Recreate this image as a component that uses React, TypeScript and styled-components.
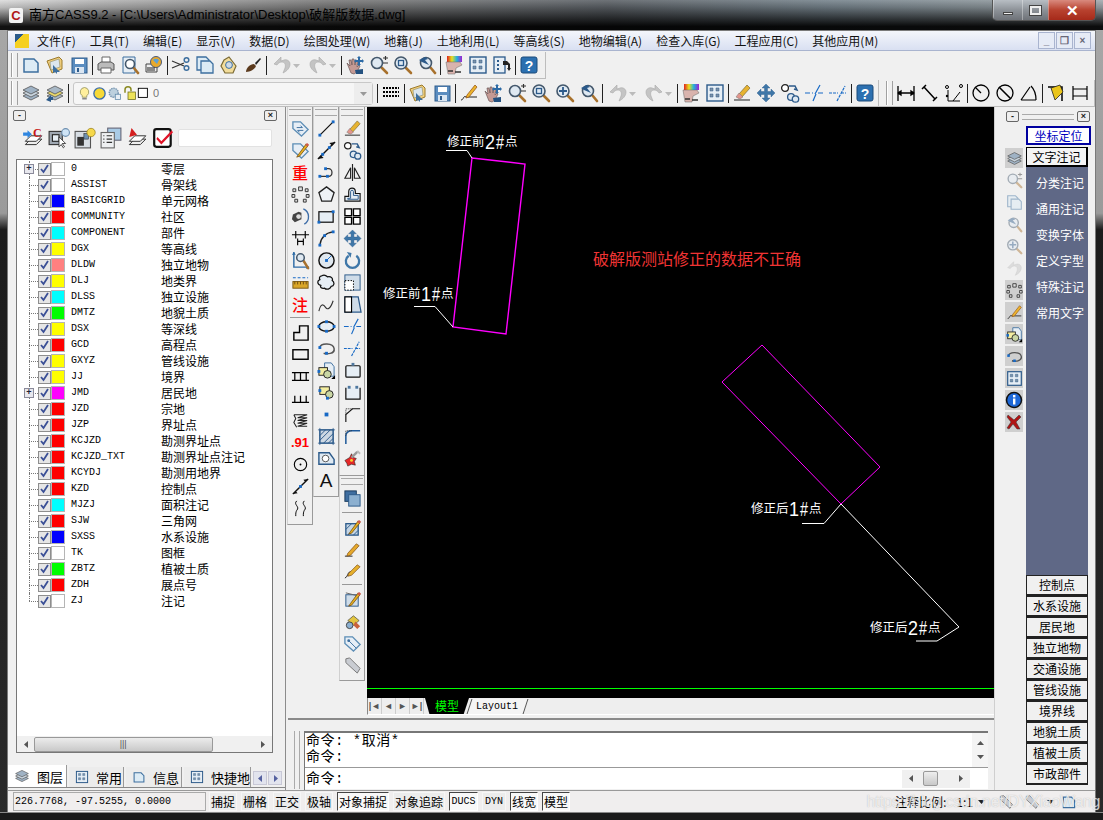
import React from 'react';
import styled, { createGlobalStyle } from 'styled-components';

const CJK = `"Noto Sans CJK SC", "Liberation Sans", sans-serif`;
const MONO = `"Liberation Mono", "Noto Sans CJK SC", monospace`;

const GlobalStyle = createGlobalStyle`
  html, body { margin: 0; padding: 0; overflow: hidden; background: #111; }
  body { font-family: ${CJK}; font-size: 12px; color: #000; }
  * { box-sizing: border-box; }
`;

/* ---------- icons ---------- */
const B = '#3d6f9f';
const mag = (cx = 8, cy = 8, r = 5, fill = '#dfe9f2') => (
  <>
    <path d={`M${cx + r - 1} ${cy + r - 1}L18 18`} stroke="#a8712c" strokeWidth="2.6" strokeLinecap="round" />
    <circle cx={cx} cy={cy} r={r} fill={fill} stroke="#44586c" strokeWidth="1.6" />
  </>
);
const node = (x: number, y: number) => <rect x={x - 1.5} y={y - 1.5} width="3" height="3" fill="#1769c5" />;
const hand = (
  <path d="M2 8l3 3-1-6 2 0 1 5 0-6 2 0 1 6 1-5 2 1-1 6 2-2 1 1-3 6-3 2-3-1z" fill="#c59a94" stroke="#6b5656" strokeWidth=".7" />
);
const stack = (c1: string, c2: string) => (
  <>
    <path d="M10 9l8 4-8 4-8-4z" fill={c2} stroke="#555" strokeWidth=".8" />
    <path d="M10 6l8 4-8 4-8-4z" fill={c1} stroke="#555" strokeWidth=".8" />
    <path d="M10 3l8 4-8 4-8-4z" fill={c2} stroke="#555" strokeWidth=".8" />
  </>
);
const sheets = (
  <>
    <path d="M3 16l5-5h10l-5 5z" fill="#eee" stroke="#333" strokeWidth=".9" />
    <path d="M3 13l5-5h10l-5 5z" fill="#fff" stroke="#333" strokeWidth=".9" />
  </>
);
const tag = (
  <path d="M2 3h8l8 8-7 7-9-8z" fill="#e6eef6" stroke="#5c8db5" strokeWidth="1.4" />
);
const pencil = (
  <>
    <path d="M8 14L16 3l2 2-9 11-3 1z" fill="#e6b020" stroke="#704a10" strokeWidth=".8" />
    <path d="M15 4l2-2 2 2-2 2z" fill="#d05a4a" />
  </>
);

const ICONS: Record<string, React.ReactNode> = {
  newdoc: <path d="M3 4h10l4 4v9H3z" fill="#dcebf5" stroke={B} strokeWidth="1.5" />,
  open: (
    <>
      <path d="M2 6l12-4 3 3v9l-10 4z" fill="#f1cf7d" stroke="#9b7a2c" />
      <path d="M5 7l9-3 1 8-9 3z" fill="#dbe6ee" stroke="#8a8a6a" strokeWidth=".6" />
      <path d="M8 10l7 7-3 0 0 2-2-2-2 1z" fill={B} />
    </>
  ),
  save: (
    <>
      <rect x="3" y="3" width="15" height="15" fill="#5b8dc0" stroke="#2f5c8c" />
      <rect x="6" y="4" width="9" height="5" fill="#fff" />
      <rect x="6" y="12" width="9" height="6" fill="#dbe6f2" />
      <rect x="8" y="13" width="2" height="4" fill="#2f5c8c" />
    </>
  ),
  print: (
    <>
      <path d="M6 2h8v6H6z" fill="#fff" stroke="#666" />
      <path d="M2 9l3-2h10l3 2v6H2z" fill="#bbb" stroke="#555" />
      <path d="M5 13h10v5H5z" fill="#fff" stroke="#666" />
    </>
  ),
  preview: (
    <>
      <path d="M3 2h12v16H3z" fill="#e6eef5" stroke={B} />
      {mag(10, 9, 4.5, '#fff')}
    </>
  ),
  publish: (
    <>
      <path d="M2 9h11v8H2z" fill="#eee" stroke="#444" />
      <circle cx="12" cy="7" r="5.5" fill="#e8a92c" stroke="#4a5a7a" />
      <path d="M9 5a4 4 0 016 0l-2 4z" fill="#5aa0d8" />
      <path d="M3 13h8M3 15h8" stroke="#222" />
    </>
  ),
  cut: (
    <>
      <path d="M1 6l12 5M1 13l12-5" stroke="#333" strokeWidth="1.2" />
      <circle cx="15.5" cy="5" r="2.3" fill="none" stroke={B} strokeWidth="1.5" />
      <circle cx="15.5" cy="13" r="2.3" fill="none" stroke={B} strokeWidth="1.5" />
    </>
  ),
  copy: (
    <>
      <path d="M2 2h9l3 3v10H2z" fill="#dcebf5" stroke={B} strokeWidth="1.3" />
      <path d="M6 6h9l3 3v9H6z" fill="#dcebf5" stroke={B} strokeWidth="1.3" />
    </>
  ),
  paste: (
    <>
      <path d="M5 5l5-3 7 9-3 7H6L2 11z" fill="#f2dc9a" stroke="#7a6a35" strokeWidth="1.2" />
      <circle cx="10" cy="10" r="3.4" fill="#cfdbe6" stroke={B} />
    </>
  ),
  brush: (
    <>
      <path d="M12 8l5-5 1 1-5 6z" fill="#222" />
      <path d="M3 17c0-4 4-8 8-8l2 2c-1 3-6 6-10 6z" fill="#5b3a1d" />
    </>
  ),
  undo: <path d="M9 2L2 9l3 1c1-2 3-3 5-3 3 0 4 3 3 6l-2 5c4-2 7-5 7-9 0-3-3-5-6-4L9 6z" fill="#c4c4c4" stroke="#aaa" strokeWidth=".6" />,
  redo: <path d="M11 2l7 7-3 1c-1-2-3-3-5-3-3 0-4 3-3 6l2 5c-4-2-7-5-7-9 0-3 3-5 6-4l3 1z" fill="#c4c4c4" stroke="#aaa" strokeWidth=".6" />,
  pan: (
    <>
      {hand}
      <path d="M14 1l2 2h-1v2h2V4l2 2-2 2V7h-2v2h1l-2 2-2-2h1V7h-2v1l-2-2 2-2v1h2V3h-1z" fill="#2c6aa5" />
      <path d="M10 15l8-1v5h-7z" fill="#24517f" />
    </>
  ),
  zoomrt: (
    <>
      {mag(8, 8, 5.5)}
      <path d="M14 3h5M16.5 1v4M14 8h5" stroke="#333" strokeWidth="1.2" />
    </>
  ),
  zoomwin: (
    <>
      {mag(8, 8, 6)}
      <rect x="5.5" y="5.5" width="5" height="5" fill="none" stroke="#2c5a8a" strokeWidth="1.3" />
    </>
  ),
  zoomall: (
    <>
      {mag(8, 8, 6)}
      <path d="M8 4v8M4 8h8" stroke="#2c5a8a" strokeWidth="1.8" />
    </>
  ),
  zoomprev: (
    <>
      {mag(9, 8, 5.5)}
      <path d="M2 5l6-3 3 2-3 1 4 5-7-3z" fill="#2c5a8a" />
    </>
  ),
  props: (
    <>
      <rect x="3" y="1" width="15" height="6" fill="url(#rb)" />
      <path d="M2 7h14l2 3-6 3-1 6H4z" fill="#d9b3ad" stroke="#666" strokeWidth=".5" />
      <path d="M4 16h5M11 17h6" stroke="#333" strokeWidth="1.4" />
    </>
  ),
  dc: (
    <>
      <rect x="2" y="2" width="16" height="16" fill="#e6eef5" stroke="#2c5a8a" strokeWidth="1.4" />
      <path d="M5 5h3v3H5zM11 5h3v3h-3zM5 11h3v3H5zM11 11h3v3h-3z" fill="#7d93a8" stroke="#2c5a8a" strokeWidth=".5" />
    </>
  ),
  tool: (
    <>
      <rect x="2" y="2" width="11" height="16" fill="#e6eef5" stroke="#2c5a8a" strokeWidth="1.3" />
      <path d="M5 5h2v2H5zM5 9h2v2H5zM5 13h2v2H5z" fill="#2c5a8a" />
      <path d="M11 6h4l3 3v4h1l-2 3-2-3h1v-3h-5z" fill="#222" />
    </>
  ),
  help: (
    <>
      <rect x="2" y="2" width="16" height="16" rx="2" fill="#2c70b0" stroke="#1a4a7a" />
      <text x="10" y="15.5" textAnchor="middle" fontSize="14" fontWeight="700" fill="#fff" fontFamily="Liberation Sans">?</text>
    </>
  ),
  layers: stack('#c8d4de', '#9fb2c4'),
  layers2: (
    <>
      {stack('#e8d86a', '#a8b8c6')}
      <path d="M1 17l5-5v2h2v3H6v2z" fill="#2c5a8a" />
    </>
  ),
  layerCur: (
    <>
      {sheets}
      <path d="M1 5h4V3l4 3.500L5 10V8H1z" fill="#2f86e0" />
      <text x="14" y="9" textAnchor="middle" fontSize="11" fontWeight="700" fill="#c81818" fontFamily="Liberation Serif">C</text>
    </>
  ),
  layerSel: (
    <>
      <rect x="1" y="4" width="12" height="12" fill="#9fa8b2" stroke="#333" />
      <rect x="4" y="7" width="6" height="6" fill="#e6eef5" stroke="#222" />
      <circle cx="16" cy="5" r="3.500" fill="#cfe4f6" stroke="#6d8fb0" />
      <path d="M10 9l0 9 2-2 2 3 1-1-2-3 3 0z" fill="#fff" stroke="#222" strokeWidth=".7" />
    </>
  ),
  layerState: (
    <>
      <rect x="1" y="4" width="14" height="15" fill="#d7dde3" stroke="#555" />
      <rect x="3" y="9" width="6" height="8" fill="#333" />
      <rect x="9" y="6" width="4" height="5" fill="#6d90b0" stroke="#222" strokeWidth=".5" />
      <circle cx="15.500" cy="5" r="3.800" fill="#f6d84a" stroke="#998226" strokeWidth=".7" />
    </>
  ),
  layerList: (
    <>
      <rect x="7" y="1" width="12" height="11" fill="#a9cbe6" stroke="#667" />
      <rect x="1" y="5" width="12" height="14" fill="#eef0f2" stroke="#666" />
      <path d="M3 8h1M6 8h5M3 11h1M6 11h5M3 14h1M6 14h5" stroke="#333" />
    </>
  ),
  layerRed: (
    <>
      {sheets}
      <path d="M5 1l5 6-7 2z" fill="#d42020" />
    </>
  ),
  checkRed: (
    <>
      <rect x="2" y="2" width="15" height="16" rx="2" fill="#fff" stroke="#111" strokeWidth="2" />
      <path d="M5 9l3.500 4L18 3l1 2-10.500 11L4 11z" fill="#e01428" />
    </>
  ),
  bulb: (
    <>
      <path d="M10 2a6 6 0 00-3 11v2h6v-2a6 6 0 00-3-11z" fill="#ffef9c" stroke="#8a8a55" />
      <path d="M7 16h6v2H7z" fill="#888" />
    </>
  ),
  sun: <circle cx="10" cy="10" r="7.5" fill="#f6d937" stroke="#3d6ea8" strokeWidth="1.8" />,
  gear: (
    <>
      <circle cx="9" cy="9" r="6" fill="#bcd0de" stroke="#7c99b3" strokeWidth="2" strokeDasharray="2 1" />
      <rect x="11" y="11" width="7" height="7" fill="#e6eef5" stroke="#5c86a8" />
    </>
  ),
  lock: (
    <>
      <path d="M4 9V5a4 4 0 018 0v2" fill="none" stroke="#8a8a22" strokeWidth="2" />
      <rect x="8" y="8" width="10" height="10" fill="#ede35a" stroke="#6a6a1a" />
    </>
  ),
  swatch: <rect x="2" y="2" width="14" height="14" fill="#fff" stroke="#000" strokeWidth="1.4" />,
  linetype: (
    <path d="M2 5h16M2 9h16M2 13h16" stroke="#000" strokeWidth="1.8" strokeDasharray="2 1" />
  ),
  matchprop: (
    <>
      <path d="M2 17c3 0 2-5 5-3l11 0" fill="none" stroke="#222" />
      <path d="M8 12L16 2l2 2-8 10-3 1z" fill="#ecb42c" stroke="#9b5a1c" strokeWidth=".8" />
    </>
  ),
  erase: (
    <>
      <path d="M2 17h16" stroke="#222" />
      <path d="M7 11l8-9 3 3-8 9-4 1z" fill="#e7b330" stroke="#6b5a2a" strokeWidth=".6" />
      <path d="M4 14l3-4 4 4-3 2z" fill="#e2958c" stroke="#777" strokeWidth=".5" />
    </>
  ),
  movearrows: <path d="M10 1l4 4h-2.500v3.500H15V6l4 4-4 4v-2.500h-3.500V15H14l-4 4-4-4h2.500v-3.500H5V14l-4-4 4-4v2.500h3.500V5H6z" fill="#3f77a8" stroke="#2c5a8a" strokeWidth=".4" />,
  copycircles: (
    <>
      <circle cx="5" cy="5" r="3.400" fill="#fff" stroke="#222" strokeWidth="1.300" />
      <circle cx="11" cy="14" r="3.400" fill="#dfe9f2" stroke="#2c5a8a" strokeWidth="1.300" />
      <circle cx="15.500" cy="16" r="3.200" fill="#dfe9f2" stroke="#2c5a8a" strokeWidth="1.300" />
      <path d="M9 3h6l2 4-3-1" fill="none" stroke="#2c5a8a" strokeWidth="1.500" />
    </>
  ),
  breakat: <path d="M1 10h5M8 10h1M11 11l5-9M9 18l3-7M14 10h5" stroke="#1769c5" strokeWidth="1.200" fill="none" />,
  breakb: <path d="M1 10h9M13 10h5M9 18l8-15" stroke="#1769c5" strokeWidth="1.200" strokeDasharray="3 1" fill="none" />,
  dimh: <path d="M2 3v15M18 3v15M2 10h16M2 10l3-2v4zM18 10l-3-2v4z" stroke="#000" strokeWidth="1.300" fill="#000" />,
  dimal: <path d="M2 6l4-4M13 18l4-4M4 4l11 12" stroke="#000" strokeWidth="1.500" fill="none" />,
  ordinate: (
    <>
      <path d="M4 18V7M4 18h12M9 18l7-9" stroke="#000" fill="none" />
      <circle cx="3" cy="4" r="1.500" fill="none" stroke="#000" />
      <circle cx="17" cy="3" r="1.500" fill="none" stroke="#000" />
      <circle cx="3" cy="13" r="1.200" fill="#000" />
    </>
  ),
  radius: (
    <>
      <circle cx="10" cy="10" r="8" fill="none" stroke="#000" strokeWidth="1.300" />
      <path d="M4 4l6 6" stroke="#000" strokeWidth="1.300" />
    </>
  ),
  diam: (
    <>
      <circle cx="10" cy="10" r="8" fill="none" stroke="#000" strokeWidth="1.300" />
      <path d="M4 4l12 12" stroke="#000" strokeWidth="1.600" />
    </>
  ),
  angle: <path d="M2 17h15M2 17l9-13M12 3c3 3 5 8 5 14" stroke="#000" strokeWidth="1.200" fill="none" />,
  qdim: (
    <>
      <path d="M2 4l14 0v14" stroke="#000" strokeWidth="1.500" fill="none" />
      <path d="M5 5l9-3 3 7-8 8z" fill="#eac51c" stroke="#222" strokeWidth=".8" />
    </>
  ),
  base: <path d="M3 3v14M17 3v14M3 6h14M3 13h14" stroke="#000" strokeWidth="1.200" fill="none" />,
  tagblue: (
    <>
      {tag}
      <path d="M6 9l6 0-2-2M13 12H7l2 2" stroke={B} fill="none" />
    </>
  ),
  tagpen: (
    <>
      {tag}
      {pencil}
    </>
  ),
  dots: <path d="M8 2h4v4H8zM2 4h3v3H2zM15 4h3v3h-3zM1 10h3v3H1zM16 10h3v3h-3zM4 15h3v3H4zM13 15h3v3h-3z" fill="#ddd" stroke="#333" />,
  camera: (
    <>
      <path d="M2 8l6-3 3 1v7l-7 3-3-3z" fill="#444" />
      <circle cx="8" cy="10" r="2.500" fill="#ddd" />
      <path d="M13 2a9 9 0 011 16" fill="none" stroke="#3f6ea8" strokeWidth="1.400" />
    </>
  ),
  dimh2: <path d="M1 6h18M5 2v8M15 2v8M7 10v7M13 10v7M7 13h6" stroke="#000" strokeWidth="1.200" fill="none" />,
  axis: (
    <>
      <path d="M3 1v16h16" stroke="#2c6aa5" strokeWidth="1.500" fill="none" />
      <path d="M3 1l-2 3h4zM19 17l-3-2v4z" fill="#2c6aa5" />
      {mag(10, 7, 4)}
    </>
  ),
  ruler: (
    <>
      <path d="M2 5h16" stroke="#1769c5" strokeWidth="1.200" strokeDasharray="3 2" />
      <rect x="2" y="9" width="16" height="7" fill="#d9a628" stroke="#7a5a14" />
      <path d="M4 9v3M7 9v3M10 9v3M13 9v3M16 9v3" stroke="#6b4a10" />
    </>
  ),
  stairs: <path d="M3 18V10h6V3h9v15z" fill="none" stroke="#000" strokeWidth="1.500" />,
  rect: <rect x="2" y="5" width="16" height="10" fill="none" stroke="#000" strokeWidth="1.500" />,
  ladder: <path d="M1 6h18M1 14h18M4 6v8M10 6v8M16 6v8" stroke="#000" strokeWidth="1.300" />,
  comb: <path d="M1 14h18M4 14V7M10 14V7M16 14V7" stroke="#000" strokeWidth="1.300" />,
  spring: <path d="M3 4h14l-10 3h10L7 10h10l-10 3h10L7 16h10M3 4l2 4-2 4 3 5" stroke="#222" strokeWidth="1.100" fill="none" />,
  circdot: (
    <>
      <circle cx="10" cy="10" r="6.500" fill="none" stroke="#000" strokeWidth="1.200" />
      <circle cx="10" cy="10" r="1" fill="#000" />
    </>
  ),
  dline: (
    <>
      <path d="M2 18L18 2" stroke="#111" strokeWidth="1.500" />
      <path d="M18 2l-5 1 2 2zM2 18l5-1-2-2z" fill="#111" />
      {node(10, 10)}
    </>
  ),
  ss: <path d="M6 2C2 6 10 8 6 12c-1 2-1 3-1 6M14 2c-4 4 4 6 0 10-1 2-1 3-1 6" fill="none" stroke="#000" />,
  line: (
    <>
      <path d="M3 17L17 3" stroke="#111" strokeWidth="1.300" />
      {node(3, 17)}
      {node(17, 3)}
    </>
  ),
  xline: (
    <>
      <path d="M1 19L19 1" stroke="#111" strokeWidth="1.500" />
      <path d="M19 1l-6 1 3 3zM1 19l6-1-3-3z" fill="#111" />
      {node(6, 14)}
      {node(13, 7)}
    </>
  ),
  pline: (
    <>
      <path d="M3 14h9c5 0 5-8 0-8H9" fill="none" stroke="#333" strokeWidth="1.300" />
      {node(3, 14)}
      {node(11, 14)}
      {node(9, 6)}
    </>
  ),
  polygon: <path d="M10 2l8 6-3 9H5L2 8z" fill="#eef2f6" stroke="#222" strokeWidth="1.400" />,
  rectn: (
    <>
      <rect x="2" y="5" width="15" height="11" fill="#e6eef5" stroke="#111" strokeWidth="1.300" />
      {node(2, 16)}
      {node(17, 5)}
    </>
  ),
  arc: (
    <>
      <path d="M3 17C4 9 9 4 17 3" fill="none" stroke="#222" strokeWidth="1.400" />
      {node(3, 17)}
      {node(8, 7)}
      {node(17, 3)}
    </>
  ),
  circle: (
    <>
      <circle cx="10" cy="10" r="8" fill="#e0e8ef" stroke="#111" strokeWidth="1.500" />
      <path d="M10 10l5-5" stroke="#1769c5" />
      {node(10, 10)}
    </>
  ),
  cloud: <path d="M5 3c3-2 5 0 6 1 4-1 6 2 5 4 3 2 2 6-1 6-1 3-5 4-7 2-3 1-5-1-4-3-4-1-4-5-1-6-1-2 0-4 2-4z" fill="#e6eef5" stroke="#111" strokeWidth="1.300" />,
  spline: <path d="M2 17c2-9 5-7 7-4s5 2 8-7" fill="none" stroke="#333" strokeWidth="1.200" />,
  ellipse: (
    <>
      <ellipse cx="10" cy="10" rx="8" ry="5" fill="#e6eef5" stroke="#111" strokeWidth="1.400" />
      {node(10, 5)}
      {node(10, 15)}
      {node(2, 10)}
      {node(18, 10)}
    </>
  ),
  ellarc: (
    <>
      <path d="M3 9c1-5 14-5 15 1s-8 6-11 5" fill="none" stroke="#555" strokeWidth="1.600" />
      {node(3, 9)}
      {node(10, 15)}
    </>
  ),
  insert: (
    <>
      <path d="M8 2h7l3 4v10H8z" fill="#e6eef5" stroke={B} />
      <rect x="2" y="7" width="9" height="8" fill="#f3eda0" stroke="#222" />
      <circle cx="11" cy="14" r="4" fill="#c9d6a4" stroke="#222" />
      {node(2, 11)}
      <path d="M15 19l4-4v4z" fill="#000" />
    </>
  ),
  block: (
    <>
      <rect x="3" y="4" width="10" height="8" fill="#f3eda0" stroke="#222" />
      <circle cx="13" cy="12" r="4" fill="#c9d6a4" stroke="#222" />
      {node(3, 8)}
      {node(11, 16)}
    </>
  ),
  point: <rect x="8" y="8" width="4" height="4" fill="#1769c5" />,
  hatch: (
    <>
      <rect x="3" y="3" width="14" height="14" fill="#cdd8e3" stroke="#2c5a8a" strokeWidth="1.300" />
      <path d="M3 9l6-6M3 14L14 3M7 17L17 7M12 17l5-5" stroke="#2c5a8a" />
      <path d="M1 3h18M1 17h18M3 1v18M17 1v18" stroke="#2c5a8a" strokeWidth=".8" />
    </>
  ),
  region: (
    <>
      <path d="M2 4h11l5 7v5H2z" fill="#dfe9f2" stroke="#2c5a8a" strokeWidth="1.500" />
      <circle cx="9" cy="10" r="3.500" fill="#fff" stroke="#555" />
    </>
  ),
  mirror: <path d="M10 1v18M8 5L2 16h6zM12 5l6 11h-6z" fill="none" stroke="#222" strokeWidth="1.200" />,
  offset: (
    <>
      <path d="M2 17v-5h4V7c0-5 7-5 7 0v2h5v8z" fill="#e6eef5" stroke="#111" strokeWidth="1.200" />
      <path d="M5 15v-1h3V7c0-2 3-2 3 0v4h5v4z" fill="none" stroke="#2c5a8a" />
    </>
  ),
  array: <path d="M2 2h7v7H2zM11 2h7v7h-7zM2 11h7v7H2zM11 11h7v7h-7z" fill="#fff" stroke="#000" strokeWidth="1.400" />,
  rotate: (
    <>
      <path d="M6 5a7 7 0 108 0" fill="none" stroke="#3f77a8" strokeWidth="2.400" />
      <path d="M4 1l5 1-1 5z" fill="#3f77a8" />
    </>
  ),
  scale: (
    <>
      <rect x="2" y="2" width="16" height="16" fill="#cfdce8" stroke="#2c5a8a" />
      <rect x="2" y="8" width="9" height="10" fill="#fff" stroke="#000" strokeDasharray="1.500 1.500" />
    </>
  ),
  stretch: (
    <>
      <path d="M2 2h14l3 16H2z" fill="#cfdce8" stroke="#2c5a8a" strokeWidth="1.300" />
      <rect x="2" y="2" width="7" height="16" fill="#fff" stroke="#000" strokeWidth="1.200" />
    </>
  ),
  trim: (
    <>
      <rect x="3" y="5" width="15" height="12" rx="1" fill="#e6eef5" stroke="#111" strokeWidth="1.300" />
      <rect x="9" y="2" width="3" height="3" fill="#4f78a0" />
    </>
  ),
  extend: (
    <>
      <path d="M3 5v12h15V5" fill="#e6eef5" stroke="#111" strokeWidth="1.300" />
      <rect x="5" y="3" width="3" height="3" fill="#4f78a0" />
      <rect x="13" y="3" width="3" height="3" fill="#4f78a0" />
    </>
  ),
  chamfer: (
    <>
      <path d="M3 18V10L10 4h8" stroke="#111" strokeWidth="1.200" fill="none" />
      <path d="M3 10V4h7" stroke="#222" strokeDasharray="1 1" fill="none" />
    </>
  ),
  fillet: (
    <>
      <path d="M3 18V9c0-3 3-5 6-5h9" stroke="#1f5a9a" strokeWidth="1.600" fill="none" />
      <path d="M3 9V4h6" stroke="#222" strokeDasharray="1 1" fill="none" />
    </>
  ),
  explode: (
    <>
      <path d="M2 12l5-3 2-4 2 4 3 1-2 3 1 4-4-1-4 2-1-3z" fill="#e62828" stroke="#222" strokeWidth=".6" />
      <path d="M9 9l6-6" stroke="#999" strokeWidth="2.500" />
      <path d="M15 2l3 3" stroke="#bbb" strokeWidth="2" />
      <circle cx="9" cy="12" r="1.500" fill="#f5d32c" />
    </>
  ),
  order: (
    <>
      <rect x="2" y="2" width="12" height="11" fill="#3f6ea0" stroke="#1a3a5a" />
      <rect x="6" y="6" width="12" height="12" fill="#8cb0d0" stroke="#2c5a8a" />
    </>
  ),
  hatchpen: (
    <>
      <rect x="3" y="6" width="13" height="12" fill="#c6d6e4" stroke="#2c5a8a" strokeWidth="1.400" />
      <path d="M3 12l6-6M5 18L16 7M11 18l5-5" stroke="#2c5a8a" />
      {pencil}
    </>
  ),
  penline: (
    <>
      <path d="M2 17h8" stroke="#222" />
      <path d="M5 14l9-10 3 2-9 10-4 1z" fill="#e6a92c" stroke="#7a4a12" strokeWidth=".7" />
    </>
  ),
  curvepen: (
    <>
      <path d="M2 17c4-2 2-6 6-7" stroke="#222" fill="none" />
      <path d="M6 12l9-9 3 2-9 9-4 1z" fill="#e6b02c" stroke="#7a4a12" strokeWidth=".7" />
    </>
  ),
  checksheet: (
    <>
      <rect x="3" y="5" width="13" height="12" fill="#cfdce8" stroke="#2c5a8a" />
      <path d="M3 3l12 3" stroke="#666" />
      {pencil}
    </>
  ),
  blocks2: (
    <>
      <path d="M5 9l6-5 6 5-6 5z" fill="#e2c540" stroke="#444" strokeWidth=".7" />
      <circle cx="7" cy="14" r="3.500" fill="#8cb0d0" stroke="#444" />
      <path d="M13 10l5 5-3 3-4-4z" fill="#c9623c" />
    </>
  ),
  tagdraw: (
    <>
      {tag}
      <path d="M6 7l8 8" stroke={B} />
      <circle cx="6" cy="7" r="1.500" fill={B} />
    </>
  ),
  pin: <path d="M3 3l4-1 11 11-3 5L3 7z" fill="#c9ccd2" stroke="#777" />,
};

function Icon({ n, s = 20 }: { n: string; s?: number }) {
  return (
    <svg width={s} height={s} viewBox="0 0 20 20" aria-hidden="true">
      {ICONS[n]}
    </svg>
  );
}

function Tri({ dir, color = '#555' }: { dir: 'l' | 'r' | 'u' | 'd'; color?: string }) {
  const pts = { l: '6,1 2,4.500 6,8', r: '3,1 7,4.500 3,8', u: '1,6 4.500,2 8,6', d: '1,3 4.500,7 8,3' }[dir];
  return (
    <svg width="9" height="9" viewBox="0 0 9 9" aria-hidden="true">
      <polygon points={pts} fill={color} />
    </svg>
  );
}

/* ---------- window frame ---------- */
const Frame = styled.div`
  position: relative;
  width: 1103px;
  height: 820px;
  overflow: hidden;
  display: flex;
  flex-direction: column;
  background: linear-gradient(180deg, #a9a9a9 0, #9a9a9a 26%, #1c1c1c 28%, #2a2a2a 100%);
`;

const TitleBar = styled.div`
  height: 30px;
  flex: none;
  display: flex;
  align-items: flex-start;
  justify-content: space-between;
  padding: 6px 7px 0 9px;
  background:
    linear-gradient(180deg, rgba(255, 255, 255, .2) 0, rgba(90, 90, 90, .25) 25%, rgba(0, 0, 0, .92) 88%),
    linear-gradient(90deg, #d8d8d8 0, #b0b0b0 8%, #6b6b6b 30%, #4a5056 55%, #66757f 75%, #7f8a90 90%, #99a0a6 100%);
`;

const TitleLeft = styled.div`
  display: flex;
  align-items: center;
  gap: 6px;
  font: 13px "Liberation Sans", "Noto Sans CJK SC", sans-serif;
  color: #000;
  line-height: 18px;
`;

const AppLogo = styled.span`
  width: 14px;
  height: 15px;
  background: #f2f2f2;
  border-radius: 2px;
  color: #b01818;
  font: 700 13px/15px "Liberation Sans", sans-serif;
  text-align: center;
`;

const CaptionButtons = styled.div`
  display: flex;
  margin-top: -6px;
  height: 21px;
  border: 1px solid #555;
  border-top: 0;
  border-radius: 0 0 5px 5px;
  overflow: hidden;
`;

const CaptionBtn = styled.div<{ $w: number; $close?: boolean }>`
  width: ${p => p.$w}px;
  display: flex;
  align-items: center;
  justify-content: center;
  color: #fff;
  border-left: 1px solid rgba(255, 255, 255, .35);
  background: ${p =>
    p.$close
      ? 'linear-gradient(180deg,#d98a7e 0,#b8422f 50%,#a62a1a 100%)'
      : 'linear-gradient(180deg,#b8bec4 0,#8d9298 50%,#6e7278 100%)'};
  font: 700 15px/1 "Liberation Sans", sans-serif;
`;

const MinGlyph = styled.i`
  width: 10px;
  height: 3px;
  margin-top: 6px;
  background: #eee;
  border: 1px solid #444;
`;

const MaxGlyph = styled.i`
  width: 11px;
  height: 9px;
  border: 2px solid #eee;
  outline: 1px solid #444;
`;

const Body = styled.div`
  flex: 1;
  min-height: 0;
  padding: 0 7px;
  display: flex;
`;

const Client = styled.div`
  flex: 1;
  min-width: 0;
  display: flex;
  flex-direction: column;
  background: #f0f0f0;
  border: 1px solid #7a7a7a;
  border-bottom: 0;
`;

const BottomEdge = styled.div`
  height: 8px;
  flex: none;
  background: #1a1a1a;
  border-top: 1px solid #888;
`;

/* ---------- menu ---------- */
const MenuBar = styled.div`
  height: 20px;
  flex: none;
  display: flex;
  align-items: center;
  padding-left: 7px;
  background: linear-gradient(180deg, #f4f6fb 0, #d9e0f2 100%);
  border-bottom: 1px solid #a9b4cf;
`;

const MenuLogo = styled.span`
  width: 14px;
  height: 14px;
  margin-right: 8px;
  background: linear-gradient(135deg, #2a5a8a 0 30%, #f5d020 31% 100%);
`;

const MenuItem = styled.span`
  margin-right: 14px;
  font-size: 12px;
  white-space: nowrap;
  color: #111;
`;

const MdiButtons = styled.div`
  margin-left: auto;
  margin-right: 4px;
  display: flex;
  gap: 1px;
`;

const MdiBtn = styled.span`
  width: 17px;
  height: 17px;
  border: 1px solid #a9b4cf;
  background: #e6ebf6;
  color: #667;
  font: 700 10px/15px "Liberation Sans", sans-serif;
  text-align: center;
`;

/* ---------- toolbars ---------- */
const ToolRow = styled.div`
  height: 28px;
  flex: none;
  display: flex;
  align-items: stretch;
  padding-top: 1px;
`;

const Bar = styled.div<{ $w?: number; $fill?: boolean }>`
  ${p => (p.$w ? `width:${p.$w}px;` : '')}
  ${p => (p.$fill ? 'flex:1;min-width:0;padding-left:7px;' : 'padding-left:3px;')}
  display: flex;
  align-items: center;
  border-right: 1px solid #bdbdbd;
  border-bottom: 1px solid #bdbdbd;
`;

const Grip = styled.i`
  flex: none;
  width: 7px;
  height: 24px;
  margin-right: 1px;
  border-left: 1px solid #a0a0a0;
  border-right: 1px solid #a0a0a0;
  box-shadow: inset 1px 0 #fff;
`;

const Slot = styled.span<{ $w?: number }>`
  flex: none;
  width: ${p => p.$w ?? 24}px;
  height: 24px;
  display: flex;
  align-items: center;
  justify-content: center;
`;

const Sep = styled.i`
  flex: none;
  width: 1px;
  height: 19px;
  margin: 0 1px;
  background: #222;
`;

const Combo = styled.div`
  flex: none;
  width: 300px;
  height: 23px;
  margin: 0 3px;
  display: flex;
  align-items: center;
  background: #f6f6f6;
  border: 1px solid #c8c8c8;
  border-radius: 3px;
  padding-left: 3px;
  color: #777;
  font: 11px "Liberation Sans", sans-serif;
`;

const ComboArrow = styled.span`
  margin-left: auto;
  width: 18px;
  height: 21px;
  background: #ededed;
  display: flex;
  align-items: center;
  justify-content: center;
`;

/* ---------- main area ---------- */
const Main = styled.div`
  flex: 1;
  min-height: 0;
  display: flex;
`;

const Palette = styled.div`
  width: 278px;
  flex: none;
  display: flex;
  flex-direction: column;
  border-right: 1px solid #8c8c8c;
`;

const PaletteHead = styled.div`
  height: 15px;
  flex: none;
  display: flex;
  align-items: center;
  justify-content: space-between;
  padding: 2px 8px 0 5px;
`;

const HeadBtn = styled.span`
  width: 13px;
  height: 11px;
  border: 1px solid #666;
  border-radius: 2px;
  background: #eee;
  font: 700 9px/8px "Liberation Sans", sans-serif;
  text-align: center;
  color: #222;
`;

const PaletteTools = styled.div`
  height: 32px;
  flex: none;
  display: flex;
  align-items: center;
  padding-left: 14px;
  gap: 4px;
`;

const SearchBox = styled.div`
  width: 94px;
  height: 18px;
  background: #fff;
  border: 1px solid #e2e2e2;
  border-radius: 2px;
`;

const ListBox = styled.div`
  width: 257px;
  height: 594px;
  margin: 5px 0 0 8px;
  flex: none;
  display: flex;
  flex-direction: column;
  background: #fff;
  border: 1px solid #777;
`;

const ListBody = styled.div`
  flex: 1;
  min-height: 0;
  padding-top: 1px;
`;

const LayerRow = styled.div`
  height: 16px;
  display: flex;
  align-items: center;
  padding-left: 12px;
  position: relative;
`;

const Connector = styled.i<{ $last?: boolean }>`
  flex: none;
  width: 9px;
  height: 16px;
  position: relative;
  &::before {
    content: '';
    position: absolute;
    left: 0;
    top: 0;
    height: ${p => (p.$last ? 8 : 16)}px;
    border-left: 1px dotted #777;
  }
  &::after {
    content: '';
    position: absolute;
    left: 0;
    right: 0;
    top: 8px;
    border-top: 1px dotted #777;
  }
`;

const Plus = styled.span`
  position: absolute;
  left: 7px;
  top: 3px;
  width: 10px;
  height: 10px;
  background: #e8e8ee;
  border: 1px solid #8a8a9a;
  color: #223;
  font: 700 9px/7px "Liberation Sans", sans-serif;
  text-align: center;
`;

const Check = styled.span`
  flex: none;
  width: 13px;
  height: 13px;
  margin-right: 1px;
  border: 1px solid #8e8e8e;
  background: #e6e6e6;
  display: flex;
  align-items: center;
  justify-content: center;
`;

const Swatch = styled.span<{ $c: string }>`
  flex: none;
  width: 12px;
  height: 12px;
  background: ${p => p.$c};
  outline: 1px solid #b5b5b5;
`;

const LayerName = styled.span`
  width: 90px;
  margin-left: 7px;
  flex: none;
  font: 10px/16px ${MONO};
  color: #000;
  white-space: nowrap;
`;

const LayerLabel = styled.span`
  font-size: 12px;
  line-height: 16px;
  color: #000;
`;

const HScroll = styled.div`
  height: 16px;
  flex: none;
  display: flex;
  align-items: center;
  justify-content: space-between;
  padding: 0 5px;
  background: #f0f0f0;
`;

const ScrollThumb = styled.div<{ $w: number }>`
  width: ${p => p.$w}px;
  height: 15px;
  background: linear-gradient(180deg, #ececec 0, #c9c9c9 100%);
  border: 1px solid #999;
  border-radius: 2px;
  color: #555;
  font: 9px/12px "Liberation Sans", sans-serif;
  text-align: center;
`;

const ScrollRest = styled.span`
  width: 40px;
`;

const TabStrip = styled.div`
  margin-top: auto;
  margin-bottom: 2px;
  height: 22px;
  flex: none;
  display: flex;
  align-items: flex-end;
  border-bottom: 1px solid #888;
`;

const PalTab = styled.div<{ $active?: boolean; $w: number }>`
  width: ${p => p.$w}px;
  height: ${p => (p.$active ? 22 : 20)}px;
  flex: none;
  display: flex;
  align-items: center;
  gap: 7px;
  padding-left: 6px;
  overflow: hidden;
  white-space: nowrap;
  font-size: 13px;
  margin-right: 2px;
  background: ${p => (p.$active ? '#fff' : '#ececec')};
  border-right: 1px solid #999;
  svg { flex: none; }
`;

const TabArrow = styled.span`
  flex: none;
  width: 14px;
  height: 14px;
  margin-bottom: 2px;
  margin-right: 1px;
  background: #e2e4ee;
  border: 1px solid #c8c8d6;
  display: flex;
  align-items: center;
  justify-content: center;
`;

/* ---------- draw columns ---------- */
const ToolColumns = styled.div`
  width: 81px;
  flex: none;
  display: flex;
  align-items: flex-start;
  padding-left: 1px;
`;

const ToolCol = styled.div`
  width: 26px;
  flex: none;
  display: flex;
  flex-direction: column;
`;

const ColBlock = styled.div<{ $h: number }>`
  height: ${p => p.$h}px;
  display: flex;
  flex-direction: column;
  align-items: center;
  background: #f0f0f0;
  border-left: 1px solid #d0d0d0;
  border-right: 1px solid #9a9a9a;
  border-bottom: 1px solid #9a9a9a;
`;

const ColGrip = styled.i`
  flex: none;
  width: 22px;
  height: 7px;
  margin: 2px 0 1px;
  border-top: 1px solid #a8a8a8;
  border-bottom: 1px solid #a8a8a8;
`;

const ColSep = styled.i`
  flex: none;
  width: 20px;
  height: 1px;
  margin: 2px 0 3px;
  background: #999;
`;

const ColSlot = styled.span<{ $h?: number }>`
  flex: none;
  height: ${p => p.$h ?? 22}px;
  width: 24px;
  display: flex;
  align-items: center;
  justify-content: center;
`;

const RedGlyph = styled.span<{ $s?: number }>`
  color: #ff0000;
  font-size: ${p => p.$s ?? 16}px;
  line-height: 1;
  font-weight: 500;
`;

const NumGlyph = styled.span`
  color: #ff0000;
  font: 700 13px/1 "Liberation Sans", sans-serif;
`;

const BigA = styled.span`
  font: 500 19px/1 "Liberation Sans", sans-serif;
  color: #111;
`;

/* ---------- canvas + command ---------- */
const Center = styled.div`
  width: 627px;
  flex: none;
  display: flex;
  flex-direction: column;
`;

const CanvasArea = styled.div`
  flex: 1;
  min-height: 0;
  background: #000;
`;

const CanvasSvg = styled.svg`
  display: block;
  width: 627px;
  height: 591px;
`;

const LayoutTabs = styled.div`
  height: 17px;
  flex: none;
  display: flex;
  align-items: center;
  border-left: 1px solid #888;
  border-bottom: 1px solid #fff;
  background: #eee;
  font-size: 12px;
`;

const NavBtn = styled.span`
  width: 14px;
  height: 16px;
  flex: none;
  display: flex;
  align-items: center;
  justify-content: center;
  font: 700 9px/1 "Liberation Sans", sans-serif;
  color: #555;
  border-right: 1px solid #ccc;
`;

const ModelTab = styled.span`
  height: 16px;
  flex: none;
  width: 44px;
  margin-left: 1px;
  background: #000;
  color: #00ff00;
  font-size: 12px;
  line-height: 16px;
  text-align: center;
  clip-path: polygon(0 0, 100% 0, 88% 100%, 10% 100%);
`;

const LayoutTab = styled.span`
  margin-left: 0;
  padding: 0 7px 0 6px;
  height: 15px;
  font: 10px/15px ${MONO};
  border-left: 1px solid #555;
  border-right: 1px solid #555;
  background: #f4f4f4;
  transform: skewX(-18deg);
`;

const LayoutTabText = styled.span`
  display: inline-block;
  transform: skewX(18deg);
`;

const CommandPane = styled.div`
  height: 72px;
  flex: none;
  margin-top: 3px;
  margin-left: -79px;
  width: 706px;
  border-top: 2px solid #8a8a8a;
  display: flex;
  padding: 11px 6px 0 6px;
  background: #f0f0f0;
`;

const CmdGrip = styled.i`
  flex: none;
  width: 6px;
  height: 58px;
  margin-right: 4px;
  border-left: 1px solid #aaa;
  border-right: 1px solid #aaa;
`;

const CmdMain = styled.div`
  flex: 1;
  min-width: 0;
  display: flex;
  flex-direction: column;
  border-left: 1px solid #777;
`;

const CmdLog = styled.div`
  height: 37px;
  flex: none;
  display: flex;
  border-top: 2px solid #777;
  border-bottom: 1px solid #999;
  background: #fff;
`;

const CmdText = styled.div`
  flex: 1;
  padding-left: 1px;
  font: 14px/16px ${MONO};
  letter-spacing: .5px;
  white-space: pre;
`;

const VBar = styled.div`
  width: 16px;
  flex: none;
  display: flex;
  flex-direction: column;
  justify-content: space-between;
  align-items: center;
  padding: 6px 0;
  background: #f4f4f4;
`;

const CmdInput = styled.div`
  height: 21px;
  flex: none;
  display: flex;
  align-items: center;
  background: #fff;
  padding-left: 1px;
  font: 14px/20px ${MONO};
  letter-spacing: .5px;
  white-space: pre;
`;

const CmdHScroll = styled.div`
  margin-left: auto;
  width: 68px;
  height: 18px;
  margin-right: 18px;
  background: #f0f0f0;
  display: flex;
  align-items: center;
  justify-content: space-between;
  padding: 0 5px;
`;

const CmdThumb = styled.span`
  width: 15px;
  height: 15px;
  margin-left: -12px;
  background: linear-gradient(180deg, #eee 0, #c8c8c8 100%);
  border: 1px solid #999;
  border-radius: 2px;
`;

/* ---------- right panel ---------- */
const RightPanel = styled.div`
  flex: 1;
  min-width: 0;
  display: flex;
  flex-direction: column;
  padding: 0 0 5px 7px;
  border-left: 1px solid #cfcfcf;
`;

const RightHead = styled.div`
  height: 15px;
  flex: none;
  margin: 2px 0 0 4px;
  display: flex;
  align-items: center;
  gap: 3px;
  width: 84px;
`;

const RightGrip = styled.i`
  flex: 1;
  height: 6px;
  border-top: 1px solid #aaa;
  border-bottom: 1px solid #aaa;
`;

const RightBody = styled.div`
  flex: 1;
  min-height: 0;
  display: flex;
`;

const RightIcons = styled.div`
  width: 24px;
  flex: none;
  padding-top: 24px;
  display: flex;
  flex-direction: column;
  align-items: center;
  gap: 2px;
`;

const SideIcon = styled.span<{ $dim?: boolean }>`
  width: 18px;
  height: 20px;
  display: flex;
  align-items: center;
  justify-content: center;
  background: ${p => (p.$dim ? 'transparent' : '#cfcfcf')};
  opacity: ${p => (p.$dim ? 0.45 : 1)};
`;

const RightCol = styled.div`
  width: 62px;
  flex: none;
  display: flex;
  flex-direction: column;
  padding-top: 2px;
  position: relative;
`;

const ActiveBtn = styled.div`
  width: 65px;
  height: 19px;
  flex: none;
  border: 2px solid #0000a0;
  background: #fff;
  color: #0000c0;
  font-size: 12px;
  line-height: 15px;
  text-align: center;
  position: relative;
  z-index: 1;
`;

const CurrentBtn = styled.div`
  height: 20px;
  flex: none;
  margin-top: 2px;
  background: #f4f4f4;
  border: 1px solid #000;
  border-right-width: 2px;
  border-bottom-width: 2px;
  font-size: 12px;
  line-height: 17px;
  text-align: center;
`;

const SlatePanel = styled.div`
  flex: 1;
  min-height: 0;
  background: #5f6886;
  padding: 6px 0 0 10px;
`;

const SlateItem = styled.div`
  height: 26px;
  color: #fff;
  font-size: 12px;
  line-height: 20px;
`;

const BottomBtn = styled.div`
  height: 21px;
  flex: none;
  background: #f0f0f0;
  border: 1px solid #222;
  border-bottom-width: 2px;
  font-size: 12px;
  line-height: 18px;
  text-align: center;
`;

/* ---------- status bar ---------- */
const StatusBar = styled.div`
  height: 22px;
  flex: none;
  display: flex;
  align-items: flex-end;
  padding: 0 0 1px 5px;
  background: #f0eeee;
  border-top: 1px solid #999;
  position: relative;
`;

const Coords = styled.div`
  width: 193px;
  height: 19px;
  flex: none;
  margin-right: 3px;
  padding-left: 1px;
  border: 1px solid #aaa;
  font: 10px/17px ${MONO};
  white-space: pre;
`;

const StatusBtn = styled.span<{ $w: number; $on?: boolean; $mono?: boolean }>`
  width: ${p => p.$w}px;
  height: 19px;
  flex: none;
  margin-right: 4px;
  text-align: center;
  background: ${p => (p.$on ? '#f8f8f8' : '#ececec')};
  border: 1px solid ${p => (p.$on ? '#fff' : '#f6f6f6')};
  ${p => (p.$on ? 'border-left-color:#444;border-top-color:#444;' : '')}
  font: ${p => (p.$mono ? `10px/17px ${MONO}` : `12px/17px ${CJK}`)};
`;

const StatusRight = styled.div`
  margin-left: auto;
  height: 19px;
  display: flex;
  align-items: center;
  padding-right: 18px;
  font-size: 12px;
`;

const StatusItem = styled.span<{ $ml: number }>`
  margin-left: ${p => p.$ml}px;
  display: flex;
  align-items: center;
  white-space: nowrap;
`;

const Watermark = styled.div`
  position: absolute;
  right: -5px;
  top: 1px;
  font: 16px/20px "Liberation Sans", sans-serif;
  letter-spacing: -.3px;
  color: rgba(255, 255, 255, .72);
  text-shadow: 0 0 1px rgba(120, 120, 120, .5);
  white-space: nowrap;
`;

/* ---------- data ---------- */
const LAYERS: [string, string, string][] = [
  ['0', '零层', '#fff'],
  ['ASSIST', '骨架线', '#fff'],
  ['BASICGRID', '单元网格', '#0000ff'],
  ['COMMUNITY', '社区', '#ff0000'],
  ['COMPONENT', '部件', '#00ffff'],
  ['DGX', '等高线', '#ffff00'],
  ['DLDW', '独立地物', '#ff8080'],
  ['DLJ', '地类界', '#ffff00'],
  ['DLSS', '独立设施', '#00ffff'],
  ['DMTZ', '地貌土质', '#00ff00'],
  ['DSX', '等深线', '#ffff00'],
  ['GCD', '高程点', '#ff0000'],
  ['GXYZ', '管线设施', '#ffff00'],
  ['JJ', '境界', '#ffff00'],
  ['JMD', '居民地', '#ff00ff'],
  ['JZD', '宗地', '#ff0000'],
  ['JZP', '界址点', '#ff0000'],
  ['KCJZD', '勘测界址点', '#ff0000'],
  ['KCJZD_TXT', '勘测界址点注记', '#ff0000'],
  ['KCYDJ', '勘测用地界', '#ff0000'],
  ['KZD', '控制点', '#ff0000'],
  ['MJZJ', '面积注记', '#00ffff'],
  ['SJW', '三角网', '#ff0000'],
  ['SXSS', '水系设施', '#0000ff'],
  ['TK', '图框', '#fff'],
  ['ZBTZ', '植被土质', '#00ff00'],
  ['ZDH', '展点号', '#ff0000'],
  ['ZJ', '注记', '#fff'],
];

const MENUS = ['文件(F)', '工具(T)', '编辑(E)', '显示(V)', '数据(D)', '绘图处理(W)', '地籍(J)', '土地利用(L)', '等高线(S)', '地物编辑(A)', '检查入库(G)', '工程应用(C)', '其他应用(M)'];

const COL1 = ['tagblue', 'tagpen', '重', 'dots', 'camera', 'dimh2', 'axis', 'ruler', '注'];
const COL1B = ['stairs', 'rect', 'ladder', 'comb', 'spring', '.91', 'circdot', 'dline', 'ss'];
const COL2 = ['line', 'xline', 'pline', 'polygon', 'rectn', 'arc', 'circle', 'cloud', 'spline', 'ellipse', 'ellarc', 'insert', 'block', 'point', 'hatch', 'region', 'A'];
const COL3 = ['erase', 'copycircles', 'mirror', 'offset', 'array', 'movearrows', 'rotate', 'scale', 'stretch', 'breakat', 'breakb', 'trim', 'extend', 'chamfer', 'fillet', 'explode'];
const COL3B = ['hatchpen', 'penline', 'curvepen'];
const COL3C = ['checksheet', 'blocks2', 'tagdraw', 'pin'];

const SIDE: [string, boolean][] = [
  ['layers', false], ['zoomrt', true], ['copy', true], ['zoomprev', true], ['zoomall', true], ['undo', true],
  ['dots', false], ['matchprop', false], ['insert', false], ['ellarc', false], ['dc', false],
];

const SLATE = ['分类注记', '通用注记', '变换字体', '定义字型', '特殊注记', '常用文字'];
const LOWER = ['控制点', '水系设施', '居民地', '独立地物', '交通设施', '管线设施', '境界线', '地貌土质', '植被土质', '市政部件'];

function renderColItem(name: string) {
  if (name === '重' || name === '注') return <RedGlyph>{name}</RedGlyph>;
  if (name === '.91') return <NumGlyph>.91</NumGlyph>;
  if (name === 'A') return <BigA>A</BigA>;
  return <Icon n={name} s={19} />;
}

const Note = styled.text`
  fill: #fff;
  font-family: ${CJK};
  font-size: 12.500px;
`;

const NoteNum = styled.text`
  fill: #fff;
  font-family: "Liberation Sans", sans-serif;
  font-size: 21px;
`;

function CadNote({ x, y, head, num }: { x: number; y: number; head: string; num: string }) {
  return (
    <g transform={`translate(${x} ${y})`} stroke="none">
      <Note x={0} y={5}>{head}</Note>
      <NoteNum x={38} y={8} textLength={10} lengthAdjust="spacingAndGlyphs">{num}</NoteNum>
      <NoteNum x={49} y={8} textLength={8} lengthAdjust="spacingAndGlyphs">#</NoteNum>
      <Note x={58} y={5}>点</Note>
    </g>
  );
}

function CadDrawing() {
  const ox = -367;
  const oy = -107;
  return (
    <CanvasSvg viewBox="0 0 627 591">
      <g transform={`translate(${ox} ${oy})`} fill="none" strokeWidth="1">
        <path d="M472 158L525 164L506 334L453 327Z" stroke="#ff00ff" strokeWidth="1.400" />
        <path d="M446 150.500H467L472 158" stroke="#fff" />
        <path d="M414 306.500H435L453 327" stroke="#fff" />
        <path d="M762 345L880 467L841 504L722 382Z" stroke="#ff00ff" />
        <path d="M841 504L959 627L937 641H916" stroke="#fff" />
        <path d="M802 523.500H824L841 504" stroke="#fff" />
        <path d="M367 688.500H994" stroke="#00ff00" />
        <CadNote x={447} y={141} head="修正前" num="2" />
        <CadNote x={383} y={293} head="修正前" num="1" />
        <CadNote x={751} y={508} head="修正后" num="1" />
        <CadNote x={870} y={627} head="修正后" num="2" />
        <text x="593" y="265" fill="#f03434" stroke="none" fontSize="16" fontFamily={CJK}>破解版测站修正的数据不正确</text>
      </g>
    </CanvasSvg>
  );
}

function Slots({ names }: { names: string[] }) {
  return (
    <>
      {names.map((n, i) => (
        <Slot key={i}>
          <Icon n={n} />
        </Slot>
      ))}
    </>
  );
}

function UndoPair() {
  return (
    <>
      <Slot $w={36}>
        <Icon n="undo" />
        <Tri dir="d" color="#bbb" />
      </Slot>
      <Slot $w={36}>
        <Icon n="redo" />
        <Tri dir="d" color="#bbb" />
      </Slot>
    </>
  );
}

export default function App() {
  return (
    <Frame>
      <GlobalStyle />
      <svg width="0" height="0" style={{ position: 'absolute' }} aria-hidden="true">
        <defs>
          <linearGradient id="rb">
            <stop offset="0" stopColor="#e02020" />
            <stop offset=".33" stopColor="#e8e020" />
            <stop offset=".66" stopColor="#20b0e0" />
            <stop offset="1" stopColor="#a020d0" />
          </linearGradient>
        </defs>
      </svg>
      <TitleBar>
        <TitleLeft>
          <AppLogo>C</AppLogo>
          南方CASS9.2 - [C:\Users\Administrator\Desktop\破解版数据.dwg]
        </TitleLeft>
        <CaptionButtons>
          <CaptionBtn $w={29}><MinGlyph /></CaptionBtn>
          <CaptionBtn $w={26}><MaxGlyph /></CaptionBtn>
          <CaptionBtn $w={47} $close>✕</CaptionBtn>
        </CaptionButtons>
      </TitleBar>

      <Body>
        <Client>
          <MenuBar>
            <MenuLogo />
            {MENUS.map(m => <MenuItem key={m}>{m}</MenuItem>)}
            <MdiButtons>
              <MdiBtn>_</MdiBtn>
              <MdiBtn>❐</MdiBtn>
              <MdiBtn>×</MdiBtn>
            </MdiButtons>
          </MenuBar>

          <ToolRow>
            <Bar $w={538}>
              <Grip />
              <Slots names={['newdoc', 'open', 'save']} />
              <Sep />
              <Slots names={['print', 'preview', 'publish']} />
              <Sep />
              <Slots names={['cut', 'copy', 'paste', 'brush']} />
              <Sep />
              <UndoPair />
              <Sep />
              <Slots names={['pan', 'zoomrt', 'zoomwin', 'zoomprev']} />
              <Sep />
              <Slots names={['props', 'dc', 'tool']} />
              <Sep />
              <Slots names={['help']} />
            </Bar>
          </ToolRow>

          <ToolRow>
            <Bar $w={871}>
              <Grip />
              <Slots names={['layers', 'layers2']} />
              <Sep />
              <Combo>
                <Icon n="bulb" s={15} />
                <Icon n="sun" s={15} />
                <Icon n="gear" s={15} />
                <Icon n="lock" s={15} />
                <Icon n="swatch" s={13} />
                &nbsp;0
                <ComboArrow><Tri dir="d" color="#999" /></ComboArrow>
              </Combo>
              <Sep />
              <Slots names={['linetype']} />
              <Sep />
              <Slots names={['open', 'save']} />
              <Sep />
              <Slots names={['matchprop', 'pan', 'zoomrt', 'zoomwin', 'zoomall', 'zoomprev']} />
              <Sep />
              <UndoPair />
              <Sep />
              <Slots names={['props', 'dc']} />
              <Sep />
              <Slots names={['erase', 'movearrows', 'copycircles', 'breakat', 'breakb']} />
              <Sep />
              <Slots names={['help']} />
            </Bar>
            <Bar $fill>
              <Grip />
              <Slots names={['dimh', 'dimal', 'ordinate']} />
              <Sep />
              <Slots names={['radius', 'diam', 'angle']} />
              <Sep />
              <Slots names={['qdim', 'base']} />
            </Bar>
          </ToolRow>

          <Main>
            <Palette>
              <PaletteHead>
                <HeadBtn>-</HeadBtn>
                <HeadBtn>×</HeadBtn>
              </PaletteHead>
              <PaletteTools>
                <Icon n="layerCur" s={22} />
                <Icon n="layerSel" s={22} />
                <Icon n="layerState" s={22} />
                <Icon n="layerList" s={22} />
                <Icon n="layerRed" s={22} />
                <Icon n="checkRed" s={22} />
                <SearchBox />
              </PaletteTools>
              <ListBox>
                <ListBody>
                  {LAYERS.map(([name, label, color], i) => (
                    <LayerRow key={name}>
                      <Connector $last={i === LAYERS.length - 1} />
                      {(name === '0' || name === 'JMD') && <Plus>+</Plus>}
                      <Check>
                        <svg width="11" height="11" viewBox="0 0 11 11" aria-hidden="true">
                          <path d="M2 5l2.500 3L9 1" fill="none" stroke="#3a4f96" strokeWidth="1.800" />
                        </svg>
                      </Check>
                      <Swatch $c={color} />
                      <LayerName>{name}</LayerName>
                      <LayerLabel>{label}</LayerLabel>
                    </LayerRow>
                  ))}
                </ListBody>
                <HScroll>
                  <Tri dir="l" />
                  <ScrollThumb $w={179}>|||</ScrollThumb>
                  <ScrollRest />
                  <Tri dir="r" />
                </HScroll>
              </ListBox>
              <TabStrip>
                <PalTab $active $w={59}><Icon n="layers" s={16} />图层</PalTab>
                <PalTab $w={55}><Icon n="dc" s={14} />常用</PalTab>
                <PalTab $w={56}><Icon n="newdoc" s={14} />信息</PalTab>
                <PalTab $w={67}><Icon n="dc" s={14} />快捷地物</PalTab>
                <TabArrow><Tri dir="l" color="#5561a0" /></TabArrow>
                <TabArrow><Tri dir="r" color="#5561a0" /></TabArrow>
              </TabStrip>
            </Palette>

            <ToolColumns>
              <ToolCol>
                <ColBlock $h={418}>
                  <ColGrip />
                  {COL1.map(n => <ColSlot key={n}>{renderColItem(n)}</ColSlot>)}
                  <ColSep />
                  {COL1B.map(n => <ColSlot key={n}>{renderColItem(n)}</ColSlot>)}
                </ColBlock>
              </ToolCol>
              <ToolCol>
                <ColBlock $h={390}>
                  <ColGrip />
                  {COL2.map(n => <ColSlot key={n}>{renderColItem(n)}</ColSlot>)}
                </ColBlock>
              </ToolCol>
              <ToolCol>
                <ColBlock $h={369}>
                  <ColGrip />
                  {COL3.map(n => <ColSlot key={n}>{renderColItem(n)}</ColSlot>)}
                </ColBlock>
                <ColBlock $h={205}>
                  <ColGrip />
                  <ColSlot $h={24}><Icon n="order" s={19} /></ColSlot>
                  <ColSep />
                  {COL3B.map(n => <ColSlot key={n}>{renderColItem(n)}</ColSlot>)}
                  <ColSep />
                  {COL3C.map(n => <ColSlot key={n}>{renderColItem(n)}</ColSlot>)}
                </ColBlock>
              </ToolCol>
            </ToolColumns>

            <Center>
              <CanvasArea>
                <CadDrawing />
              </CanvasArea>
              <LayoutTabs>
                <NavBtn>|◄</NavBtn>
                <NavBtn>◄</NavBtn>
                <NavBtn>►</NavBtn>
                <NavBtn>►|</NavBtn>
                <ModelTab>模型</ModelTab>
                <LayoutTab><LayoutTabText>Layout1</LayoutTabText></LayoutTab>
              </LayoutTabs>
              <CommandPane>
                <CmdGrip />
                <CmdMain>
                  <CmdLog>
                    <CmdText>{'命令: *取消*\n命令:'}</CmdText>
                    <VBar>
                      <Tri dir="u" />
                      <Tri dir="d" />
                    </VBar>
                  </CmdLog>
                  <CmdInput>
                    命令:
                    <CmdHScroll>
                      <Tri dir="l" />
                      <CmdThumb />
                      <Tri dir="r" />
                    </CmdHScroll>
                  </CmdInput>
                </CmdMain>
              </CommandPane>
            </Center>

            <RightPanel>
              <RightHead>
                <HeadBtn>-</HeadBtn>
                <RightGrip />
                <HeadBtn>×</HeadBtn>
              </RightHead>
              <RightBody>
                <RightIcons>
                  {SIDE.map(([n, dim], i) => (
                    <SideIcon key={i} $dim={dim}><Icon n={n} s={17} /></SideIcon>
                  ))}
                  <SideIcon>
                    <svg width="18" height="18" viewBox="0 0 18 18" aria-hidden="true">
                      <circle cx="9" cy="9" r="7.500" fill="#1d68d8" stroke="#111" strokeWidth="1.500" />
                      <rect x="8" y="7.500" width="2.400" height="6" fill="#fff" />
                      <rect x="8" y="4" width="2.400" height="2.400" fill="#fff" />
                    </svg>
                  </SideIcon>
                  <SideIcon>
                    <svg width="18" height="18" viewBox="0 0 18 18" aria-hidden="true">
                      <path d="M3 2l6 5 5-5 2 2-5 5 4 7-3 0-4-5-4 5-2-1 4-6-4-5z" fill="#b01414" stroke="#333" strokeWidth=".5" />
                    </svg>
                  </SideIcon>
                </RightIcons>
                <RightCol>
                  <ActiveBtn>坐标定位</ActiveBtn>
                  <CurrentBtn>文字注记</CurrentBtn>
                  <SlatePanel>
                    {SLATE.map(s => <SlateItem key={s}>{s}</SlateItem>)}
                  </SlatePanel>
                  {LOWER.map(s => <BottomBtn key={s}>{s}</BottomBtn>)}
                </RightCol>
              </RightBody>
            </RightPanel>
          </Main>

          <StatusBar>
            <Coords>226.7768, -97.5255, 0.0000</Coords>
            <StatusBtn $w={28}>捕捉</StatusBtn>
            <StatusBtn $w={28}>栅格</StatusBtn>
            <StatusBtn $w={28}>正交</StatusBtn>
            <StatusBtn $w={28}>极轴</StatusBtn>
            <StatusBtn $w={52} $on>对象捕捉</StatusBtn>
            <StatusBtn $w={52}>对象追踪</StatusBtn>
            <StatusBtn $w={29} $on $mono>DUCS</StatusBtn>
            <StatusBtn $w={24} $mono>DYN</StatusBtn>
            <StatusBtn $w={28} $on>线宽</StatusBtn>
            <StatusBtn $w={28} $on>模型</StatusBtn>
            <StatusRight>
              <StatusItem $ml={0}>注释比例:</StatusItem>
              <StatusItem $ml={10}>1:1</StatusItem>
              <StatusItem $ml={4}><Tri dir="d" color="#222" /></StatusItem>
              <StatusItem $ml={12}><Icon n="pin" s={16} /></StatusItem>
              <StatusItem $ml={10}><Icon n="pin" s={16} /></StatusItem>
              <StatusItem $ml={6}><Tri dir="d" color="#222" /></StatusItem>
              <StatusItem $ml={6}><Icon n="newdoc" s={16} /></StatusItem>
            </StatusRight>
            <Watermark>https://blog.csdn.net/DYXiaoWang</Watermark>
          </StatusBar>
        </Client>
      </Body>
      <BottomEdge />
    </Frame>
  );
}
